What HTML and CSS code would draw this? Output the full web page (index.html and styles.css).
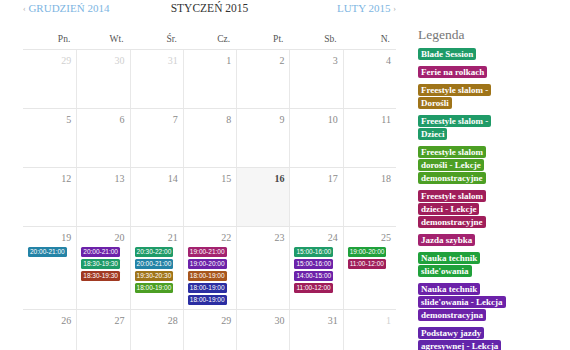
FILE: index.html
```html
<!DOCTYPE html>
<html lang="pl">
<head>
<meta charset="utf-8">
<title>Kalendarz – Styczeń 2015</title>
<link rel="stylesheet" href="styles.css">
</head>
<body>
<div class="page">
  <main class="cal">
    <header class="nav">
      <a class="nav-link prev" href="#"><span class="arr">‹</span> GRUDZIEŃ 2014</a>
      <h1 class="title">STYCZEŃ 2015</h1>
      <a class="nav-link next" href="#">LUTY 2015 <span class="arr">›</span></a>
    </header>
    <div class="dow">
      <div>Pn.</div><div>Wt.</div><div>Śr.</div><div>Cz.</div><div>Pt.</div><div>Sb.</div><div>N.</div>
    </div>
    <div class="week">
      <div class="day other"><span class="num">29</span></div>
      <div class="day other"><span class="num">30</span></div>
      <div class="day other"><span class="num">31</span></div>
      <div class="day"><span class="num">1</span></div>
      <div class="day"><span class="num">2</span></div>
      <div class="day"><span class="num">3</span></div>
      <div class="day"><span class="num">4</span></div>
    </div>
    <div class="week">
      <div class="day"><span class="num">5</span></div>
      <div class="day"><span class="num">6</span></div>
      <div class="day"><span class="num">7</span></div>
      <div class="day"><span class="num">8</span></div>
      <div class="day"><span class="num">9</span></div>
      <div class="day"><span class="num">10</span></div>
      <div class="day"><span class="num">11</span></div>
    </div>
    <div class="week">
      <div class="day"><span class="num">12</span></div>
      <div class="day"><span class="num">13</span></div>
      <div class="day"><span class="num">14</span></div>
      <div class="day"><span class="num">15</span></div>
      <div class="day today"><span class="num">16</span></div>
      <div class="day"><span class="num">17</span></div>
      <div class="day"><span class="num">18</span></div>
    </div>
    <div class="week">
      <div class="day"><span class="num">19</span>
        <div class="events"><span class="ev c-teal">20:00-21:00</span></div>
      </div>
      <div class="day"><span class="num">20</span>
        <div class="events">
          <span class="ev c-purple">20:00-21:00</span>
          <span class="ev c-green">18:30-19:30</span>
          <span class="ev c-brick">18:30-19:30</span>
        </div>
      </div>
      <div class="day"><span class="num">21</span>
        <div class="events">
          <span class="ev c-green">20:30-22:00</span>
          <span class="ev c-teal">20:00-21:00</span>
          <span class="ev c-ochre">19:30-20:30</span>
          <span class="ev c-lime">18:00-19:00</span>
        </div>
      </div>
      <div class="day"><span class="num">22</span>
        <div class="events">
          <span class="ev c-magenta">19:00-21:00</span>
          <span class="ev c-purple">19:00-20:00</span>
          <span class="ev c-rust">18:00-19:00</span>
          <span class="ev c-navy">18:00-19:00</span>
          <span class="ev c-navy">18:00-19:00</span>
        </div>
      </div>
      <div class="day"><span class="num">23</span></div>
      <div class="day"><span class="num">24</span>
        <div class="events">
          <span class="ev c-green">15:00-16:00</span>
          <span class="ev c-purple">15:00-16:00</span>
          <span class="ev c-purple">14:00-15:00</span>
          <span class="ev c-crimson">11:00-12:00</span>
        </div>
      </div>
      <div class="day"><span class="num">25</span>
        <div class="events">
          <span class="ev c-grass">19:00-20:00</span>
          <span class="ev c-crimson">11:00-12:00</span>
        </div>
      </div>
    </div>
    <div class="week">
      <div class="day"><span class="num">26</span></div>
      <div class="day"><span class="num">27</span></div>
      <div class="day"><span class="num">28</span></div>
      <div class="day"><span class="num">29</span></div>
      <div class="day"><span class="num">30</span></div>
      <div class="day"><span class="num">31</span></div>
      <div class="day other"><span class="num">1</span></div>
    </div>
  </main>

  <aside class="legend">
    <h2 class="legend-title">Legenda</h2>
    <ul class="legend-list">
      <li><span class="chip c-green">Blade Session</span></li>
      <li><span class="chip c-magenta">Ferie na rolkach</span></li>
      <li><span class="chip c-ochre">Freestyle slalom -<br>Dorośli</span></li>
      <li><span class="chip c-green">Freestyle slalom -<br>Dzieci</span></li>
      <li><span class="chip c-lime">Freestyle slalom<br>dorośli - Lekcje<br>demonstracyjne</span></li>
      <li><span class="chip c-crimson">Freestyle slalom<br>dzieci - Lekcje<br>demonstracyjne</span></li>
      <li><span class="chip c-magenta">Jazda szybka</span></li>
      <li><span class="chip c-grass">Nauka technik<br>slide'owania</span></li>
      <li><span class="chip c-purple">Nauka technik<br>slide'owania - Lekcja<br>demonstracyjna</span></li>
      <li><span class="chip c-violet">Podstawy jazdy<br>agresywnej - Lekcja<br>demonstracyjna</span></li>
    </ul>
  </aside>
</div>
</body>
</html>
```

FILE: styles.css
```css
html, body {
  margin: 0;
  padding: 0;
  overflow: hidden;
  background: #fff;
}

body {
  font-family: "Liberation Serif", "DejaVu Serif", serif;
  color: #555;
}

.page {
  display: flex;
  align-items: flex-start;
  padding-left: 23px;
}

.cal {
  width: 373px;
  flex: none;
}

/* month navigation */
.nav {
  display: grid;
  grid-template-columns: 1fr auto 1fr;
  align-items: center;
  height: 17px;
}

.nav-link {
  font-size: 11px;
  line-height: 17px;
  color: #7db5e2;
  text-decoration: none;
  white-space: nowrap;
}

.next {
  justify-self: end;
}

.arr {
  font-size: 8px;
  color: #a9a9a9;
  vertical-align: 1px;
}

.title {
  margin: 0;
  font-size: 11.5px;
  line-height: 17px;
  font-weight: normal;
  color: #333;
}

/* weekday header */
.dow {
  display: grid;
  grid-template-columns: repeat(7, 1fr);
  border-bottom: 1px solid #e6e6e6;
}

.dow div {
  text-align: right;
  font-size: 9.5px;
  line-height: 14px;
  padding: 15px 6px 3px 0;
  color: #555;
}

/* weeks */
.week {
  display: grid;
  grid-template-columns: repeat(7, 1fr);
  border-bottom: 1px solid #e6e6e6;
}

.day {
  min-height: 58px;
  box-sizing: border-box;
  padding: 5px 4px 4px 5px;
  display: flex;
  flex-direction: column;
}

.day + .day {
  border-left: 1px solid #e8e8e8;
  padding-left: 4px;
}

.num {
  display: block;
  text-align: right;
  padding-right: 1px;
  font-size: 10px;
  line-height: 12px;
  color: #8a8a8a;
}

.other .num {
  color: #d0d0d0;
}

.today {
  background: #f6f6f6;
}

.today .num {
  color: #444;
  font-weight: bold;
}

.events {
  display: flex;
  flex-direction: column;
  align-items: flex-start;
  gap: 2px;
  margin-top: 3px;
}

.ev {
  display: block;
  height: 10px;
  line-height: 10px;
  padding: 0 2px;
  border-radius: 1.5px;
  font-family: "Liberation Sans", Arial, sans-serif;
  font-size: 6.5px;
  color: #fff;
  white-space: nowrap;
}

/* legend */
.legend {
  margin-left: 22px;
  flex: none;
}

.legend-title {
  margin: 27px 0 5px;
  font-size: 13.5px;
  line-height: 16px;
  font-weight: normal;
  color: #777;
}

.legend-list {
  list-style: none;
  margin: 0;
  padding: 0;
}

.legend-list li {
  margin-bottom: 5px;
  font-size: 9px;
  line-height: 13px;
  white-space: nowrap;
}

.chip {
  font-weight: bold;
  color: #fff;
  padding: 1px 3px;
  border-radius: 2px;
  -webkit-box-decoration-break: clone;
  box-decoration-break: clone;
}

/* colours */
.c-green   { background: #1f9b68; }
.c-magenta { background: #a3226f; }
.c-ochre   { background: #9f7419; }
.c-lime    { background: #4c9f24; }
.c-crimson { background: #a01e5a; }
.c-grass   { background: #20a13b; }
.c-purple  { background: #6c22a9; }
.c-violet  { background: #6325aa; }
.c-teal    { background: #2483a6; }
.c-brick   { background: #a13a22; }
.c-rust    { background: #a7561c; }
.c-navy    { background: #2b2ea2; }
```
